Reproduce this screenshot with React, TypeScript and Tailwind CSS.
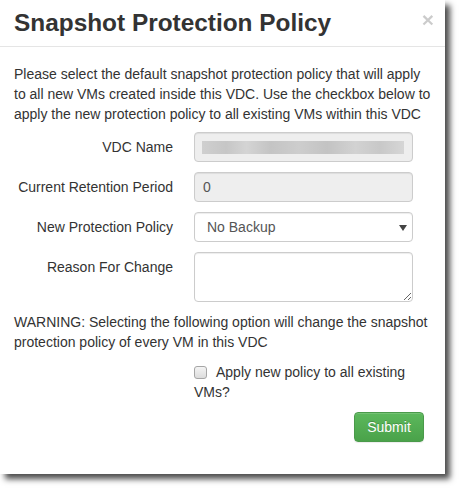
import React from "react";

const font = { fontFamily: '"Liberation Sans", Arial, Helvetica, sans-serif' };

const labelClass = "w-[159px] shrink-0 pt-[5px] text-right";
const controlClass =
  "ml-[21px] h-[30px] w-[219px] rounded-[4px] border border-[#cccccc] px-[8px] text-[14px] leading-[20px] text-[#555555] shadow-[inset_0_1px_1px_rgba(0,0,0,0.075)]";

function FormRow({ label, children }: { label: string; children: React.ReactNode }) {
  return (
    <div className="flex">
      <div className={labelClass}>{label}</div>
      {children}
    </div>
  );
}

export default function App() {
  return (
    <div className="h-[490px] w-[461px] bg-white" style={font}>
      <div className="w-[445px] bg-white text-[#333333] shadow-[5px_5px_6px_rgba(0,0,0,0.7)]">
        <div className="flex h-[47px] items-center justify-between border-b border-[#e5e5e5] pl-[14px] pr-[11px]">
          <h4 className="text-[24.4px] font-bold leading-[26px] text-[#333333]">Snapshot Protection Policy</h4>
          <button className="-mt-[7px] text-[21px] font-bold leading-none text-black opacity-20">×</button>
        </div>

        <div className="pb-[32px] pl-[14px] pr-[12px] pt-[17px] text-[14px] leading-[20px]">
          <p>
            Please select the default snapshot protection policy that will apply to all new VMs created inside this
            VDC. Use the checkbox below to apply the new protection policy to all existing VMs within this VDC
          </p>

          <div className="mt-[8px] flex flex-col gap-[10px]">
            <FormRow label="VDC Name">
              <div className={`${controlClass} flex items-center bg-[#eeeeee]`}>
                <div className="h-[13px] w-[204px] -ml-[1px] bg-[linear-gradient(90deg,#cfcfcf_0%,#c6c6c6_12%,#d4d4d4_22%,#c4c4c4_34%,#cdcdcd_48%,#c3c3c3_62%,#d2d2d2_76%,#c8c8c8_88%,#d6d6d6_100%)] blur-[0.5px]" />
              </div>
            </FormRow>
            <FormRow label="Current Retention Period">
              <div className={`${controlClass} flex items-center bg-[#eeeeee]`}>0</div>
            </FormRow>
            <FormRow label="New Protection Policy">
              <div className={`${controlClass} flex items-center justify-between bg-white pl-[12px] pr-[5px]`}>
                <span>No Backup</span>
                <svg width="8" height="6" viewBox="0 0 8 6" className="mt-[1px]">
                  <path d="M0 0h8L4 6z" fill="#444444" />
                </svg>
              </div>
            </FormRow>
            <FormRow label="Reason For Change">
              <textarea className={`${controlClass} h-[50px] bg-white`} />
            </FormRow>
          </div>

          <p className="mt-[10px]">
            WARNING: Selecting the following option will change the snapshot protection policy of every VM in this VDC
          </p>

          <label className="mt-[10px] ml-[180px] block w-[219px]">
            <input
              type="checkbox"
              className="mr-[9px] inline-block h-[13px] w-[13px] translate-y-[2px] appearance-none rounded-[3px] border border-[#a6a6a6] bg-[linear-gradient(#f4f4f4,#dcdcdc)] align-baseline"
            />
            Apply new policy to all existing VMs?
          </label>

          <div className="mt-[10px] flex justify-end pr-[9px]">
            <button className="h-[30px] w-[70px] rounded-[4px] border border-[#4a9a4a] bg-[linear-gradient(#5cb85c,#4aa24a)] text-[14px] text-white shadow-[inset_0_1px_0_rgba(255,255,255,0.15),0_1px_1px_rgba(0,0,0,0.075)] [text-shadow:0_-1px_0_rgba(0,0,0,0.2)]">
              Submit
            </button>
          </div>
        </div>
      </div>
    </div>
  );
}
